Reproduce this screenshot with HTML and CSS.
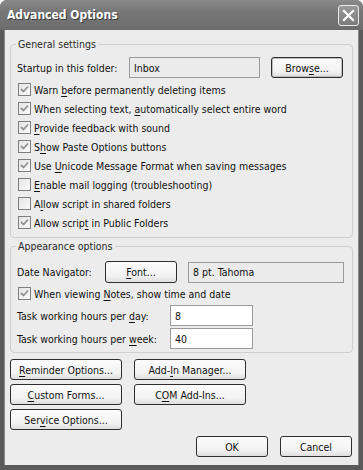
FILE: index.html
```html
<!DOCTYPE html>
<html lang="en">

<head>
    <meta charset="UTF-8">
    <title>Advanced Options</title>
    <link rel="stylesheet" href="styles.css">
</head>

<body>
    <div class="window">
        <div class="titlebar">
            <span class="title">Advanced Options</span>
            <span class="close">
                <svg width="13" height="13" viewBox="0 0 13 13">
                    <path d="M2 2 L11 11 M11 2 L2 11" stroke="#fff" stroke-width="2.2" stroke-linecap="square" fill="none" />
                </svg>
            </span>
        </div>
        <div class="dialog">
            <div class="group general">
                <span class="group-title">General settings</span>
                <div class="row">
                    <span class="label startup-label">Startup in this folder:</span>
                    <span class="field readonly folder">Inbox</span>
                    <span class="btn browse"><span>Brow<u>s</u>e...</span></span>
                </div>
                <div class="check on"><span class="box"></span><span>Warn <u>b</u>efore permanently deleting items</span></div>
                <div class="check on"><span class="box"></span><span>When selecting text, <u>a</u>utomatically select entire word</span></div>
                <div class="check on"><span class="box"></span><span><u>P</u>rovide feedback with sound</span></div>
                <div class="check on"><span class="box"></span><span>S<u>h</u>ow Paste Options buttons</span></div>
                <div class="check on"><span class="box"></span><span>Use <u>U</u>nicode Message Format when saving messages</span></div>
                <div class="check"><span class="box"></span><span><u>E</u>nable mail logging (troubleshooting)</span></div>
                <div class="check"><span class="box"></span><span>A<u>l</u>low script in shared folders</span></div>
                <div class="check on"><span class="box"></span><span>Allow scrip<u>t</u> in Public Folders</span></div>
            </div>

            <div class="group appearance">
                <span class="group-title">Appearance options</span>
                <div class="row font-row">
                    <span class="label nav-label">Date Navigator:</span>
                    <span class="btn"><span><u>F</u>ont...</span></span>
                    <span class="field readonly font-field">8 pt. Tahoma</span>
                </div>
                <div class="check on notes"><span class="box"></span><span>When viewing <u>N</u>otes, show time and date</span></div>
                <div class="row hours day">
                    <span class="label hours-label">Task working hours per <u>d</u>ay:</span>
                    <span class="field hours-field">8</span>
                </div>
                <div class="row hours week">
                    <span class="label hours-label">Task working hours per <u>w</u>eek:</span>
                    <span class="field hours-field">40</span>
                </div>
            </div>

            <div class="more">
                <span class="btn wide"><span><u>R</u>eminder Options...</span></span>
                <span class="btn wide"><span>Add-<u>I</u>n Manager...</span></span>
                <span class="btn wide"><span><u>C</u>ustom Forms...</span></span>
                <span class="btn wide"><span>C<u>O</u>M Add-Ins...</span></span>
                <span class="btn wide"><span>Ser<u>v</u>ice Options...</span></span>
            </div>

            <div class="actions">
                <span class="btn">OK</span>
                <span class="btn">Cancel</span>
            </div>
        </div>
    </div>
</body>

</html>
```

FILE: styles.css
```css
html,
body {
    margin: 0;
    padding: 0;
    background: #fff;
}

body {
    font-family: "DejaVu Sans Condensed", "DejaVu Sans", sans-serif;
    font-size: 10.5px;
    color: #111;
}

u {
    text-decoration-thickness: 1px;
    text-underline-offset: 2px;
}

.window {
    width: 363px;
    height: 470px;
    box-sizing: border-box;
    display: flex;
    flex-direction: column;
    background: #5a5a5a;
    border-radius: 7px 7px 0 0;
    overflow: hidden;
}

.titlebar {
    height: 30px;
    flex: none;
    display: flex;
    align-items: center;
    justify-content: space-between;
    padding: 0 4px 0 7px;
    background: linear-gradient(#8a8a8a, #767676 40%, #6c6c6c);
}

.title {
    font-family: "DejaVu Sans Condensed", "DejaVu Sans", sans-serif;
    font-weight: bold;
    font-size: 12px;
    color: #fff;
    text-shadow: 1px 1px 0 #3a3a3a;
}

.close {
    width: 19px;
    height: 19px;
    border: 1px solid #e8e8e8;
    border-radius: 3px;
    background: linear-gradient(#9a9a9a, #7c7c7c);
    display: flex;
    align-items: center;
    justify-content: center;
    margin-top: 1px;
}

.dialog {
    flex: 1;
    margin: 0 4px 5px;
    background: #ececec;
    padding: 14px 6px 0;
    box-shadow: inset 1px 0 0 #8a8a8a, inset -1px 0 0 #8a8a8a;
}

.group {
    position: relative;
    border: 1px solid #cfcfcf;
    border-radius: 4px;
    padding: 12px 6px 5px;
}

.group-title {
    position: absolute;
    top: -8px;
    left: 5px;
    padding: 0 2px;
    background: #ececec;
    color: #2a2a2a;
    line-height: 14px;
}

.appearance {
    margin-top: 8px;
    padding: 14px 6px 3px;
}

.row {
    display: flex;
    align-items: center;
}

.label {
    flex: none;
    white-space: nowrap;
}

.startup-label {
    width: 112px;
}

.nav-label {
    width: 88px;
}

.hours-label {
    width: 153px;
}

.field {
    box-sizing: border-box;
    height: 21px;
    border: 1px solid #9a9a9a;
    background: #fff;
    display: flex;
    align-items: center;
    padding: 0 4px;
}

.field.readonly {
    background: #ebebeb;
}

.folder {
    width: 131px;
}

.font-field {
    width: 156px;
    margin-left: 11px;
}

.hours-field {
    width: 83px;
}

.btn {
    box-sizing: border-box;
    width: 72px;
    height: 21px;
    flex: none;
    display: flex;
    align-items: center;
    justify-content: center;
    white-space: nowrap;
    border: 1px solid #2e2e2e;
    border-radius: 3px;
    background: linear-gradient(#fcfcfc, #f2f2f2 70%, #dedede);
}

.browse {
    margin-left: 11px;
    box-shadow: inset 0 0 0 1px #bdbdbd;
}

.font-row .btn {
    height: 22px;
}

.check {
    height: 19px;
    display: flex;
    align-items: center;
    padding-left: 1px;
    white-space: nowrap;
}

.general .row {
    margin-bottom: 2px;
}

.box {
    box-sizing: border-box;
    flex: none;
    width: 13px;
    height: 13px;
    margin-right: 3px;
    border: 1px solid #7e7e7e;
    background: linear-gradient(135deg, #e4e4e4, #fbfbfb);
}

.check.on .box {
    background:
        url("data:image/svg+xml;utf8,<svg xmlns='http://www.w3.org/2000/svg' width='11' height='11'><path d='M2 5 L4.5 7.5 L9 2.5' stroke='%23939393' stroke-width='1.8' fill='none'/></svg>") center no-repeat,
        linear-gradient(135deg, #e4e4e4, #fbfbfb);
}

.notes {
    height: 21px;
}

.hours.day {
    margin-top: 1px;
}

.hours.week {
    margin-top: 2px;
}

.more {
    display: grid;
    grid-template-columns: 112px 112px;
    column-gap: 12px;
    row-gap: 4px;
    margin-top: 6px;
}

.btn.wide {
    width: 112px;
}

.actions {
    display: flex;
    justify-content: flex-end;
    gap: 12px;
    margin-top: 6px;
    padding-right: 1px;
}
```
